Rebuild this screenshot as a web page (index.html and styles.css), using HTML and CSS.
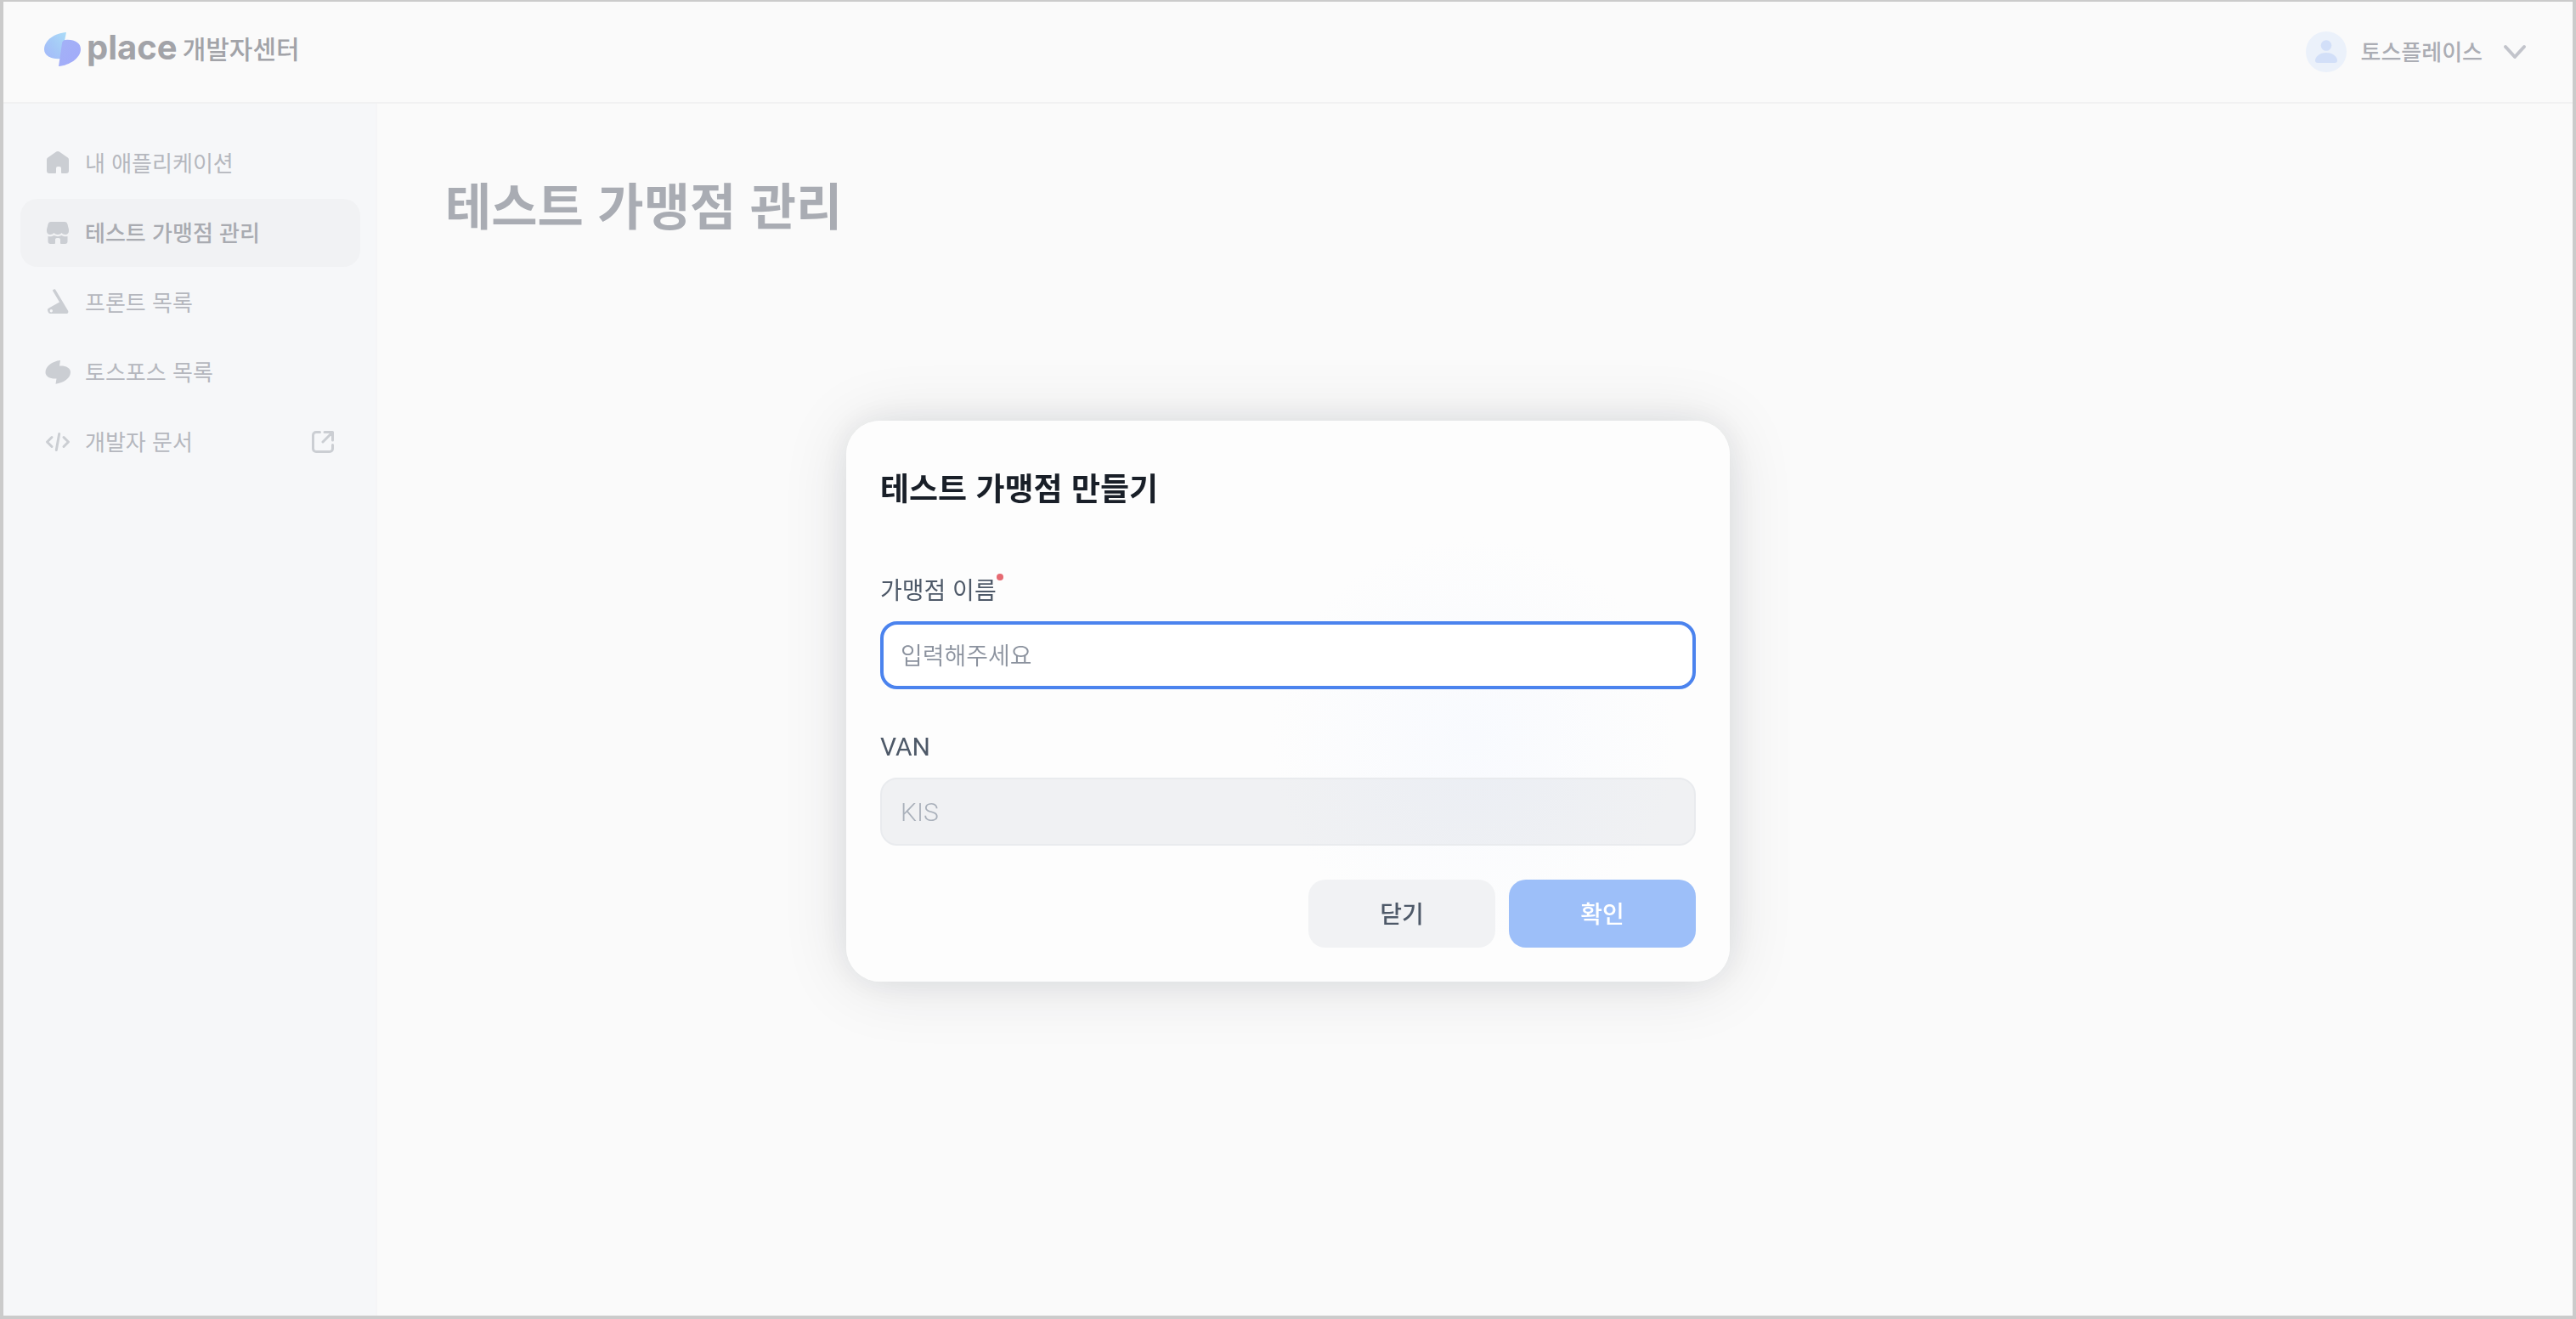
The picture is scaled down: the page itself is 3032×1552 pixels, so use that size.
FILE: index.html
```
<!DOCTYPE html>
<html lang="ko">

<head>
    <meta charset="UTF-8">
    <title>place 개발자센터</title>
    <link rel="stylesheet" href="styles.css">
</head>

<body>
    <div class="app">
        <header class="header">
            <a class="logo" href="#">
                <svg class="logo-mark" viewBox="0 0 44 40" aria-hidden="true">
                    <defs>
                        <linearGradient id="leafLeft" x1="0" y1="1" x2="1" y2="0">
                            <stop offset="0" stop-color="#a4b8fa" />
                            <stop offset="0.5" stop-color="#a5c9f7" />
                            <stop offset="1" stop-color="#abdcf8" />
                        </linearGradient>
                        <linearGradient id="leafRight" x1="0" y1="0" x2="1" y2="1">
                            <stop offset="0" stop-color="#a3b2f6" />
                            <stop offset="1" stop-color="#a2aafa" />
                        </linearGradient>
                    </defs>
                    <path fill="url(#leafLeft)" d="M26 0C13 1 0 9 0 20c0 8 9 12 20 11z" />
                    <path fill="url(#leafRight)" d="M25 9c10-1 18 3 18 11 0 10-13 19-26 20l4-27c0-2 2-4 4-4z" />
                </svg>
                <span class="logo-name">place</span>
                <span class="logo-sub">개발자센터</span>
            </a>
            <button class="user" type="button">
                <svg class="avatar" viewBox="0 0 48 48" aria-hidden="true">
                    <circle cx="24" cy="24" r="24" fill="#ebf1fa" />
                    <circle cx="24" cy="16.500" r="6.300" fill="#d2dff8" />
                    <path fill="#d2dff8" d="M24 25c8 0 13 5 13 9 0 2-1 3-3 3H14c-2 0-3-1-3-3 0-4 5-9 13-9z" />
                </svg>
                <span>토스플레이스</span>
                <svg class="chevron" viewBox="0 0 32 32" aria-hidden="true">
                    <path d="M5 10l11 12 11-12" />
                </svg>
            </button>
        </header>

        <div class="body">
            <nav class="sidebar">
                <a class="nav-item" href="#">
                    <svg class="nav-icon" viewBox="0 0 32 32" aria-hidden="true">
                        <path d="M14.200 2.600a3 3 0 0 1 3.600 0l10 7a3 3 0 0 1 1.200 2.400v13a3 3 0 0 1-3 3h-5a1 1 0 0 1-1-1v-5a2 2 0 0 0-2-2h-2a2 2 0 0 0-2 2v5a1 1 0 0 1-1 1H6a3 3 0 0 1-3-3V12a3 3 0 0 1 1.200-2.400z" />
                    </svg>
                    <span>내 애플리케이션</span>
                </a>
                <a class="nav-item active" href="#" aria-current="page">
                    <svg class="nav-icon" viewBox="0 0 32 32" aria-hidden="true">
                        <path d="M8 3h16c2 0 3 1 3.500 3L29 12v2c0 2-1.500 4-4 4-2 0-3.500-1-4.500-2-1 1.300-2.500 2-4.500 2s-3.500-.7-4.500-2c-1 1-2.500 2-4.500 2-2.500 0-4-2-4-4v-2L4.500 6C5 4 6 3 8 3z" />
                        <path d="M4.500 20c3 .8 5 .2 7-1 3 1.500 6 1.500 9 0 2 1.200 4 1.800 7 1v6a3 3 0 0 1-3 3H20a1 1 0 0 1-1-1v-4c0-1-.5-2-2-2h-2c-1.500 0-2 1-2 2v4a1 1 0 0 1-1 1H7.500a3 3 0 0 1-3-3z" />
                    </svg>
                    <span>테스트 가맹점 관리</span>
                </a>
                <a class="nav-item" href="#">
                    <svg class="nav-icon" viewBox="0 0 32 32" aria-hidden="true">
                        <path fill-rule="evenodd" d="M10 2c-.5-1 2.500-2.500 3.200-1.300L28 25.500c1 1.800 0 3.500-2 3.500H7c-2 0-3-3-3-4.500 0-1 .5-1.500 1.500-2L18 15.500zM8.300 24a1.700 1.700 0 1 0 0 3.400 1.700 1.700 0 0 0 0-3.400z" />
                    </svg>
                    <span>프론트 목록</span>
                </a>
                <a class="nav-item" href="#">
                    <svg class="nav-icon" viewBox="0 0 32 32" aria-hidden="true">
                        <path d="M19 2l-1 6.500c7-.5 13 2 13 7.500 0 7-8 12.500-17.500 13.700l1-6.200c-7 .5-13-2-13-7.500C1.500 9 9.500 3 19 2z" />
                    </svg>
                    <span>토스포스 목록</span>
                </a>
                <a class="nav-item" href="#">
                    <svg class="nav-icon line" viewBox="0 0 32 32" aria-hidden="true">
                        <path d="M9 10.500l-5.500 5.500L9 21.500M23 10.500l5.500 5.500-5.500 5.500M17.700 6.500l-3.400 19" />
                    </svg>
                    <span>개발자 문서</span>
                    <svg class="nav-icon line external" viewBox="0 0 32 32" aria-hidden="true">
                        <path d="M12.500 4.500H8A3.500 3.500 0 0 0 4.500 8v16A3.500 3.500 0 0 0 8 27.500h16a3.500 3.500 0 0 0 3.500-3.500v-4.500M18 4.500h9.500v9.500M27 5L16 16" />
                    </svg>
                </a>
            </nav>
            <main class="content">
                <h1>테스트 가맹점 관리</h1>
            </main>
        </div>
    </div>

    <div class="overlay">
        <form class="modal" role="dialog" aria-labelledby="modal-title">
            <h2 id="modal-title">테스트 가맹점 만들기</h2>
            <div class="field">
                <label for="store-name">가맹점 이름<span class="required"></span></label>
                <input class="focused" type="text" id="store-name" placeholder="입력해주세요" required>
            </div>
            <div class="field latin">
                <label for="van">VAN</label>
                <input type="text" id="van" value="KIS" disabled>
            </div>
            <div class="actions">
                <button class="btn-close" type="button">닫기</button>
                <button class="btn-confirm" type="submit">확인</button>
            </div>
        </form>
    </div>
</body>

</html>
```
FILE: styles.css
```
* {
    box-sizing: border-box;
}

body {
    margin: 0;
    background: #fafafa;
    color: #abadb4;
    font-family: "Noto Sans CJK KR", sans-serif;
    font-size: 26px;
    line-height: 40px;
}

button,
input {
    font-family: inherit;
}

.app {
    display: flex;
    flex-direction: column;
    min-height: 100vh;
    border: 4px solid #cbcbcb;
    border-top-width: 2px;
}

/* header */
.header {
    display: flex;
    align-items: center;
    justify-content: space-between;
    height: 120px;
    padding: 0 52px 0 48px;
    border-bottom: 2px solid #f1f1f2;
}

.logo {
    display: flex;
    align-items: center;
    padding-bottom: 6px;
    color: #a2a3a8;
    text-decoration: none;
}

.logo-mark {
    width: 44px;
    height: 40px;
    margin-right: 6px;
}

.logo-name {
    padding-bottom: 4px;
    font-family: Inter, sans-serif;
    font-size: 40px;
    font-weight: 700;
}

.logo-sub {
    margin-left: 6px;
    padding-bottom: 4px;
    font-size: 30px;
    font-weight: 500;
}

.user {
    display: flex;
    align-items: center;
    gap: 16px;
    padding: 0;
    border: none;
    background: none;
    color: #abadb4;
    font-size: 26px;
    font-weight: 500;
    line-height: 40px;
}

.avatar {
    width: 48px;
    height: 48px;
}

.chevron {
    width: 32px;
    height: 32px;
    margin-left: 6px;
    fill: none;
    stroke: #c2c4cb;
    stroke-width: 4;
    stroke-linecap: round;
    stroke-linejoin: round;
}

/* body */
.body {
    display: flex;
    flex: 1;
}

.sidebar {
    display: flex;
    flex-direction: column;
    gap: 2px;
    width: 440px;
    padding: 30px 20px;
    background: #f6f7f9;
    box-shadow: inset -2px 0 #f5f5f7;
}

.nav-item {
    display: flex;
    align-items: center;
    gap: 16px;
    height: 80px;
    padding: 0 28px;
    border-radius: 20px;
    color: #b5b7be;
    text-decoration: none;
}

.nav-item span,
.user span {
    padding-bottom: 3px;
}

.nav-item.active {
    background: #f1f2f4;
    color: #a9abb1;
    font-weight: 500;
}

.nav-icon {
    width: 32px;
    height: 32px;
    fill: #cbced3;
}

.nav-icon.line {
    fill: none;
    stroke: #cbced3;
    stroke-width: 3;
    stroke-linecap: round;
    stroke-linejoin: round;
}

.external {
    margin-left: auto;
}

.content {
    flex: 1;
    padding: 78px 80px;
}

h1 {
    margin: 0;
    color: #a9acb3;
    font-size: 59px;
    font-weight: 700;
    line-height: 80px;
}

/* modal */
.overlay {
    position: fixed;
    inset: 98px 0 0;
    display: flex;
    align-items: center;
    justify-content: center;
}

.modal {
    width: 1040px;
    padding: 38px 40px 40px;
    border-radius: 40px;
    background: radial-gradient(circle at 71% 57%, #f8fafe 0, #fdfdfd 240px);
    box-shadow: 0 0 40px rgba(2, 32, 51, 0.08), 0 4px 80px rgba(2, 32, 51, 0.11);
}

h2 {
    margin: 0 0 60px;
    color: #191f28;
    font-size: 37px;
    font-weight: 700;
    line-height: 80px;
}

.field {
    display: flex;
    flex-direction: column;
    align-items: flex-start;
    gap: 18px;
    margin-bottom: 46px;
    font-size: 28px;
}

.field.latin {
    gap: 16px;
    margin-top: 48px;
    font-family: Roboto, sans-serif;
    font-size: 30px;
}

.field:has(+ .latin) {
    margin-bottom: 0;
}

.field label {
    position: relative;
    color: #4e5968;
}

.required {
    position: absolute;
    top: 2px;
    right: -8px;
    width: 8px;
    height: 8px;
    border-radius: 50%;
    background: #e66a72;
}

.field input {
    width: 100%;
    height: 80px;
    padding: 0 22px;
    border: 2px solid #e9ebee;
    border-radius: 20px;
    outline: none;
    background: #fff;
    font-size: inherit;
}

.field input.focused {
    padding: 0 20px 2px;
    border: 4px solid #4b83ee;
}

.field input::placeholder {
    color: #8b929e;
    opacity: 1;
    font-weight: 350;
}

.field input:disabled {
    background: rgba(2, 24, 60, 0.05);
    color: #aab1bb;
    font-weight: 300;
}

.actions {
    display: flex;
    justify-content: flex-end;
    gap: 16px;
    margin-top: -6px;
}

.actions button {
    width: 220px;
    height: 80px;
    padding: 0 0 2px;
    border: none;
    border-radius: 20px;
    font-size: 28px;
    font-weight: 500;
}

.btn-close {
    background: #f1f2f4;
    color: #4e5968;
}

.btn-confirm {
    background: #9dbff9;
    color: #fff;
}
```
